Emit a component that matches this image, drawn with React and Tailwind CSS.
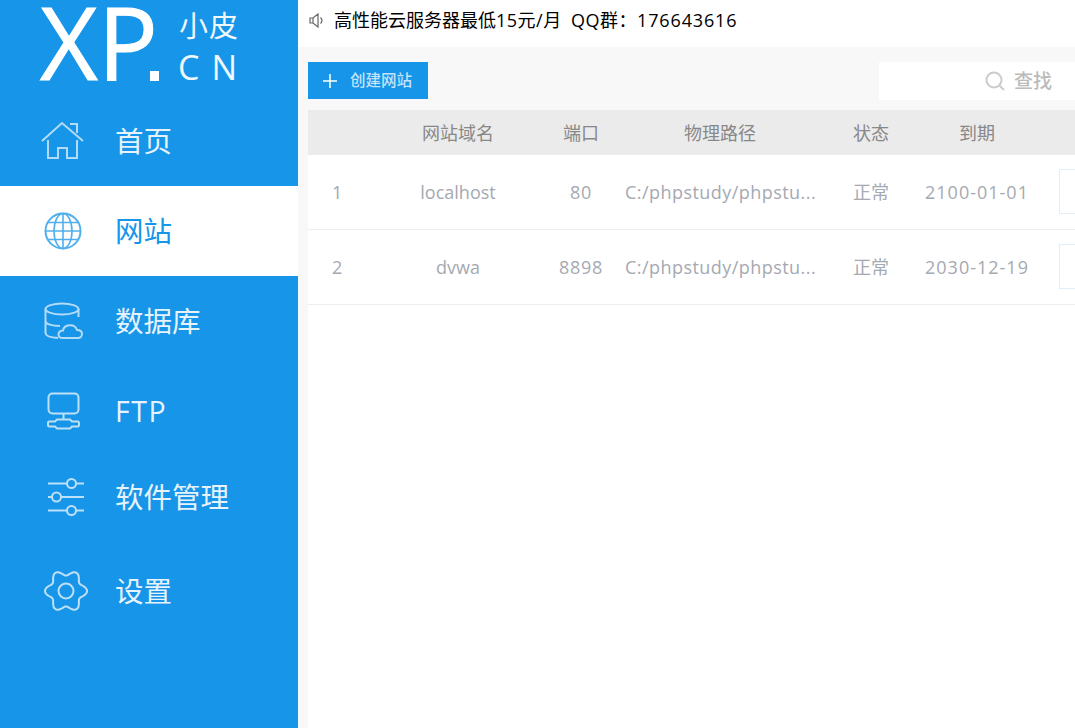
const FONT = "font-['Open_Sans','Noto_Sans_CJK_SC',sans-serif]";

// six soft lobes, points on left/right like the reference
const gearPath =
  Array.from({ length: 144 }, (_, i) => {
    const a = (i / 144) * Math.PI * 2;
    const r = 18.2 + 2.8 * Math.cos(6 * a);
    return `${i === 0 ? "M" : "L"}${(22 + r * Math.cos(a)).toFixed(2)} ${(20 + r * Math.sin(a)).toFixed(2)}`;
  }).join(" ") + " Z";

function HomeIcon() {
  return (
    <svg width="44" height="40" viewBox="0 0 44 40" fill="none" stroke="currentColor" strokeWidth="2" className="opacity-75">
      <path d="M1 20 L21 2 L42 20" />
      <path d="M29 3 H36 V12" />
      <path d="M7 19 V37 H17 V27 H26 V37 H36 V19" />
    </svg>
  );
}

function GlobeIcon() {
  return (
    <svg width="38" height="38" viewBox="0 0 38 38" fill="none" stroke="currentColor" strokeWidth="1.6" className="opacity-75">
      <circle cx="19" cy="19" r="17.5" strokeWidth="2" />
      <ellipse cx="19" cy="19" rx="9" ry="17.5" />
      <path d="M19 1.5 V36.5 M1.5 19 H36.5 M4 10.5 H34 M4 27.5 H34" />
    </svg>
  );
}

function DbIcon() {
  return (
    <svg width="40" height="38" viewBox="0 0 40 38" fill="none" stroke="currentColor" strokeWidth="2" className="opacity-75">
      <ellipse cx="18" cy="7" rx="16.5" ry="5.5" />
      <path d="M1.5 7 V31 C1.5 34 5 35.5 14 36 M34.5 7 V15 M1.5 19 C1.5 22 8 24 16 24" />
      <path d="M19 36 C13 36 13 29 19 28.5 C20 22 31 21 33 28 C40 28 39 36 34 36 Z" />
    </svg>
  );
}

function FtpIcon() {
  return (
    <svg width="33" height="38" viewBox="0 0 33 38" fill="none" stroke="currentColor" strokeWidth="2" className="opacity-80">
      <rect x="1.5" y="1.5" width="30" height="20" rx="4" />
      <path d="M16.5 21.5 V27 M10 27.5 H23 L25 29.5 H31 C32.5 29.5 32.5 34.5 31 34.5 H25 L23 36.5 H10 L8 34.5 H2 C0.5 34.5 0.5 29.5 2 29.5 H8 Z" />
    </svg>
  );
}

function SliderIcon() {
  return (
    <svg width="38" height="38" viewBox="0 0 38 38" fill="none" stroke="currentColor" strokeWidth="2" className="opacity-80">
      <path d="M1 5.5 H20 M29 5.5 H37 M1 19 H5 M14 19 H37 M1 32.5 H20 M29 32.5 H37" />
      <circle cx="24.5" cy="5.5" r="4.5" />
      <circle cx="9.5" cy="19" r="4.5" />
      <circle cx="24.5" cy="32.5" r="4.5" />
    </svg>
  );
}

function GearIcon() {
  return (
    <svg width="44" height="40" viewBox="0 0 44 40" fill="none" stroke="currentColor" strokeWidth="2" className="opacity-80">
      <circle cx="22" cy="20" r="7.5" />
      <path d={gearPath} />
    </svg>
  );
}

const menu = [
  { label: "首页", icon: <HomeIcon />, h: "h-[90px]", pad: "pl-[41px]" },
  { label: "网站", icon: <GlobeIcon />, h: "h-[90px]", pad: "pl-[44px]", active: true },
  { label: "数据库", icon: <DbIcon />, h: "h-[90px]", pad: "pl-[44px]" },
  { label: "FTP", icon: <FtpIcon />, h: "h-[90px]", pad: "pl-[47px]", spaced: true },
  { label: "软件管理", icon: <SliderIcon />, h: "h-[82px]", pad: "pl-[47px]" },
  { label: "设置", icon: <GearIcon />, h: "h-[106px]", pad: "pl-[44px]" },
];

const sites = [
  { id: 1, domain: "localhost", port: "80", expire: "2100-01-01" },
  { id: 2, domain: "dvwa", port: "8898", expire: "2030-12-19" },
];

function MenuItem({ item }) {
  return (
    <div className={`flex items-center ${item.h} ${item.active ? "bg-white text-[#1795e8]" : "text-[#e6f3fc]"}`}>
      <div className={`w-[115px] ${item.pad} flex items-center shrink-0`}>{item.icon}</div>
      <span className={`text-[28.5px] ${item.spaced ? "tracking-[1.5px]" : ""}`}>{item.label}</span>
    </div>
  );
}

export default function App() {
  return (
    <div className={`flex h-[728px] w-[1075px] overflow-hidden bg-white ${FONT}`}>
      {/* 侧边栏 */}
      <div className="w-[298px] h-full bg-[#1795e8] shrink-0 flex flex-col">
        <div className="h-[96px] pl-[40px] flex items-start text-white">
          <div className="flex items-end h-[82px] w-[139px] shrink-0">
            <span className="text-[100px] leading-[82px] h-[82px] [-webkit-text-stroke:1px_white]">XP</span>
            <span className="w-[9px] h-[10px] bg-white -ml-[8px] mb-[1px] shrink-0" />
          </div>
          <div className="mt-[7px] flex flex-col text-[#f0f8fe]">
            <span className="text-[29px] leading-[38px] tracking-[1px] whitespace-nowrap">小皮</span>
            <span className="text-[34px] leading-[44px] tracking-[12px] whitespace-nowrap -ml-[1px]">CN</span>
          </div>
        </div>
        {menu.map((item) => (
          <MenuItem key={item.label} item={item} />
        ))}
      </div>

      {/* 内容 */}
      <div className="flex-1 min-w-0 flex flex-col">
        <div className="h-[47px] flex items-center pl-[11px] text-black text-[18px] shrink-0">
          <svg width="15" height="15" viewBox="0 0 15 15" fill="none" stroke="#666" strokeWidth="1.2" className="mr-[10px] mb-[7px]">
            <path d="M1 5 H4 L9 1 V14 L4 10 H1 Z M4 5 V10" />
            <path d="M11.5 4.5 C13.5 6.5 13.5 8.5 11.5 10.5" />
          </svg>
          <span className="mb-[7px] whitespace-pre">
            高性能云服务器最低<span className="tracking-[0.5px]">15元/月</span>
            {"  "}
            <span className="tracking-[0.5px]">QQ群：</span>
            <span className="tracking-[0.85px]">176643616</span>
          </span>
        </div>

        <div className="flex-1 bg-[#f8f8f8] pl-[10px] flex flex-col min-h-0">
          <div className="h-[63px] flex items-start justify-between pt-[15px] shrink-0">
            <div className="w-[120px] h-[37px] bg-[#1795e8] flex items-center pl-[14px] text-[#c4e3f9]">
              <svg width="16" height="16" viewBox="0 0 16 16" stroke="#fff" strokeWidth="1.5" className="mr-[12px]">
                <path d="M8 1 V15 M1 8 H15" />
              </svg>
              <span className="text-[15.5px] font-medium">创建网站</span>
            </div>
            <div className="w-[196px] h-[38px] bg-white flex items-center pl-[105px] text-[#bbb]">
              <svg width="22" height="22" viewBox="0 0 22 22" fill="none" stroke="#ccc" strokeWidth="2" className="mr-[8px]">
                <circle cx="10" cy="10" r="7.5" />
                <path d="M15.5 15.5 L20 20" />
              </svg>
              <span className="text-[19px] font-medium">查找</span>
            </div>
          </div>

          <div className="h-[45px] bg-[#ebebeb] flex items-center pt-[2px] text-[#888] text-[18px] shrink-0">
            <div className="w-[59px]" />
            <div className="w-[182px] text-center">网站域名</div>
            <div className="w-[64px] text-center">端口</div>
            <div className="w-[214px] text-center">物理路径</div>
            <div className="w-[88px] text-center">状态</div>
            <div className="w-[124px] text-center">到期</div>
          </div>

          <div className="flex-1 bg-white">
            {sites.map((s) => (
              <div key={s.id} className="h-[75px] border-b border-[#eeeeee] flex items-center text-[#a5a9b2] text-[18px]">
                <div className="w-[59px] pl-[24px] shrink-0">{s.id}</div>
                <div className="w-[182px] text-center shrink-0">{s.domain}</div>
                <div className="w-[64px] text-center tracking-[0.7px] shrink-0">{s.port}</div>
                <div className="w-[214px] pl-[12px] whitespace-nowrap tracking-[0.45px] shrink-0">C:/phpstudy/phpstu...</div>
                <div className="w-[88px] text-center shrink-0">正常</div>
                <div className="w-[124px] text-center tracking-[1px] shrink-0">{s.expire}</div>
                <div className="w-[40px] h-[45px] border border-[#e1eef8] ml-[20px] -mt-[1px] shrink-0" />
              </div>
            ))}
          </div>
        </div>
      </div>
    </div>
  );
}
